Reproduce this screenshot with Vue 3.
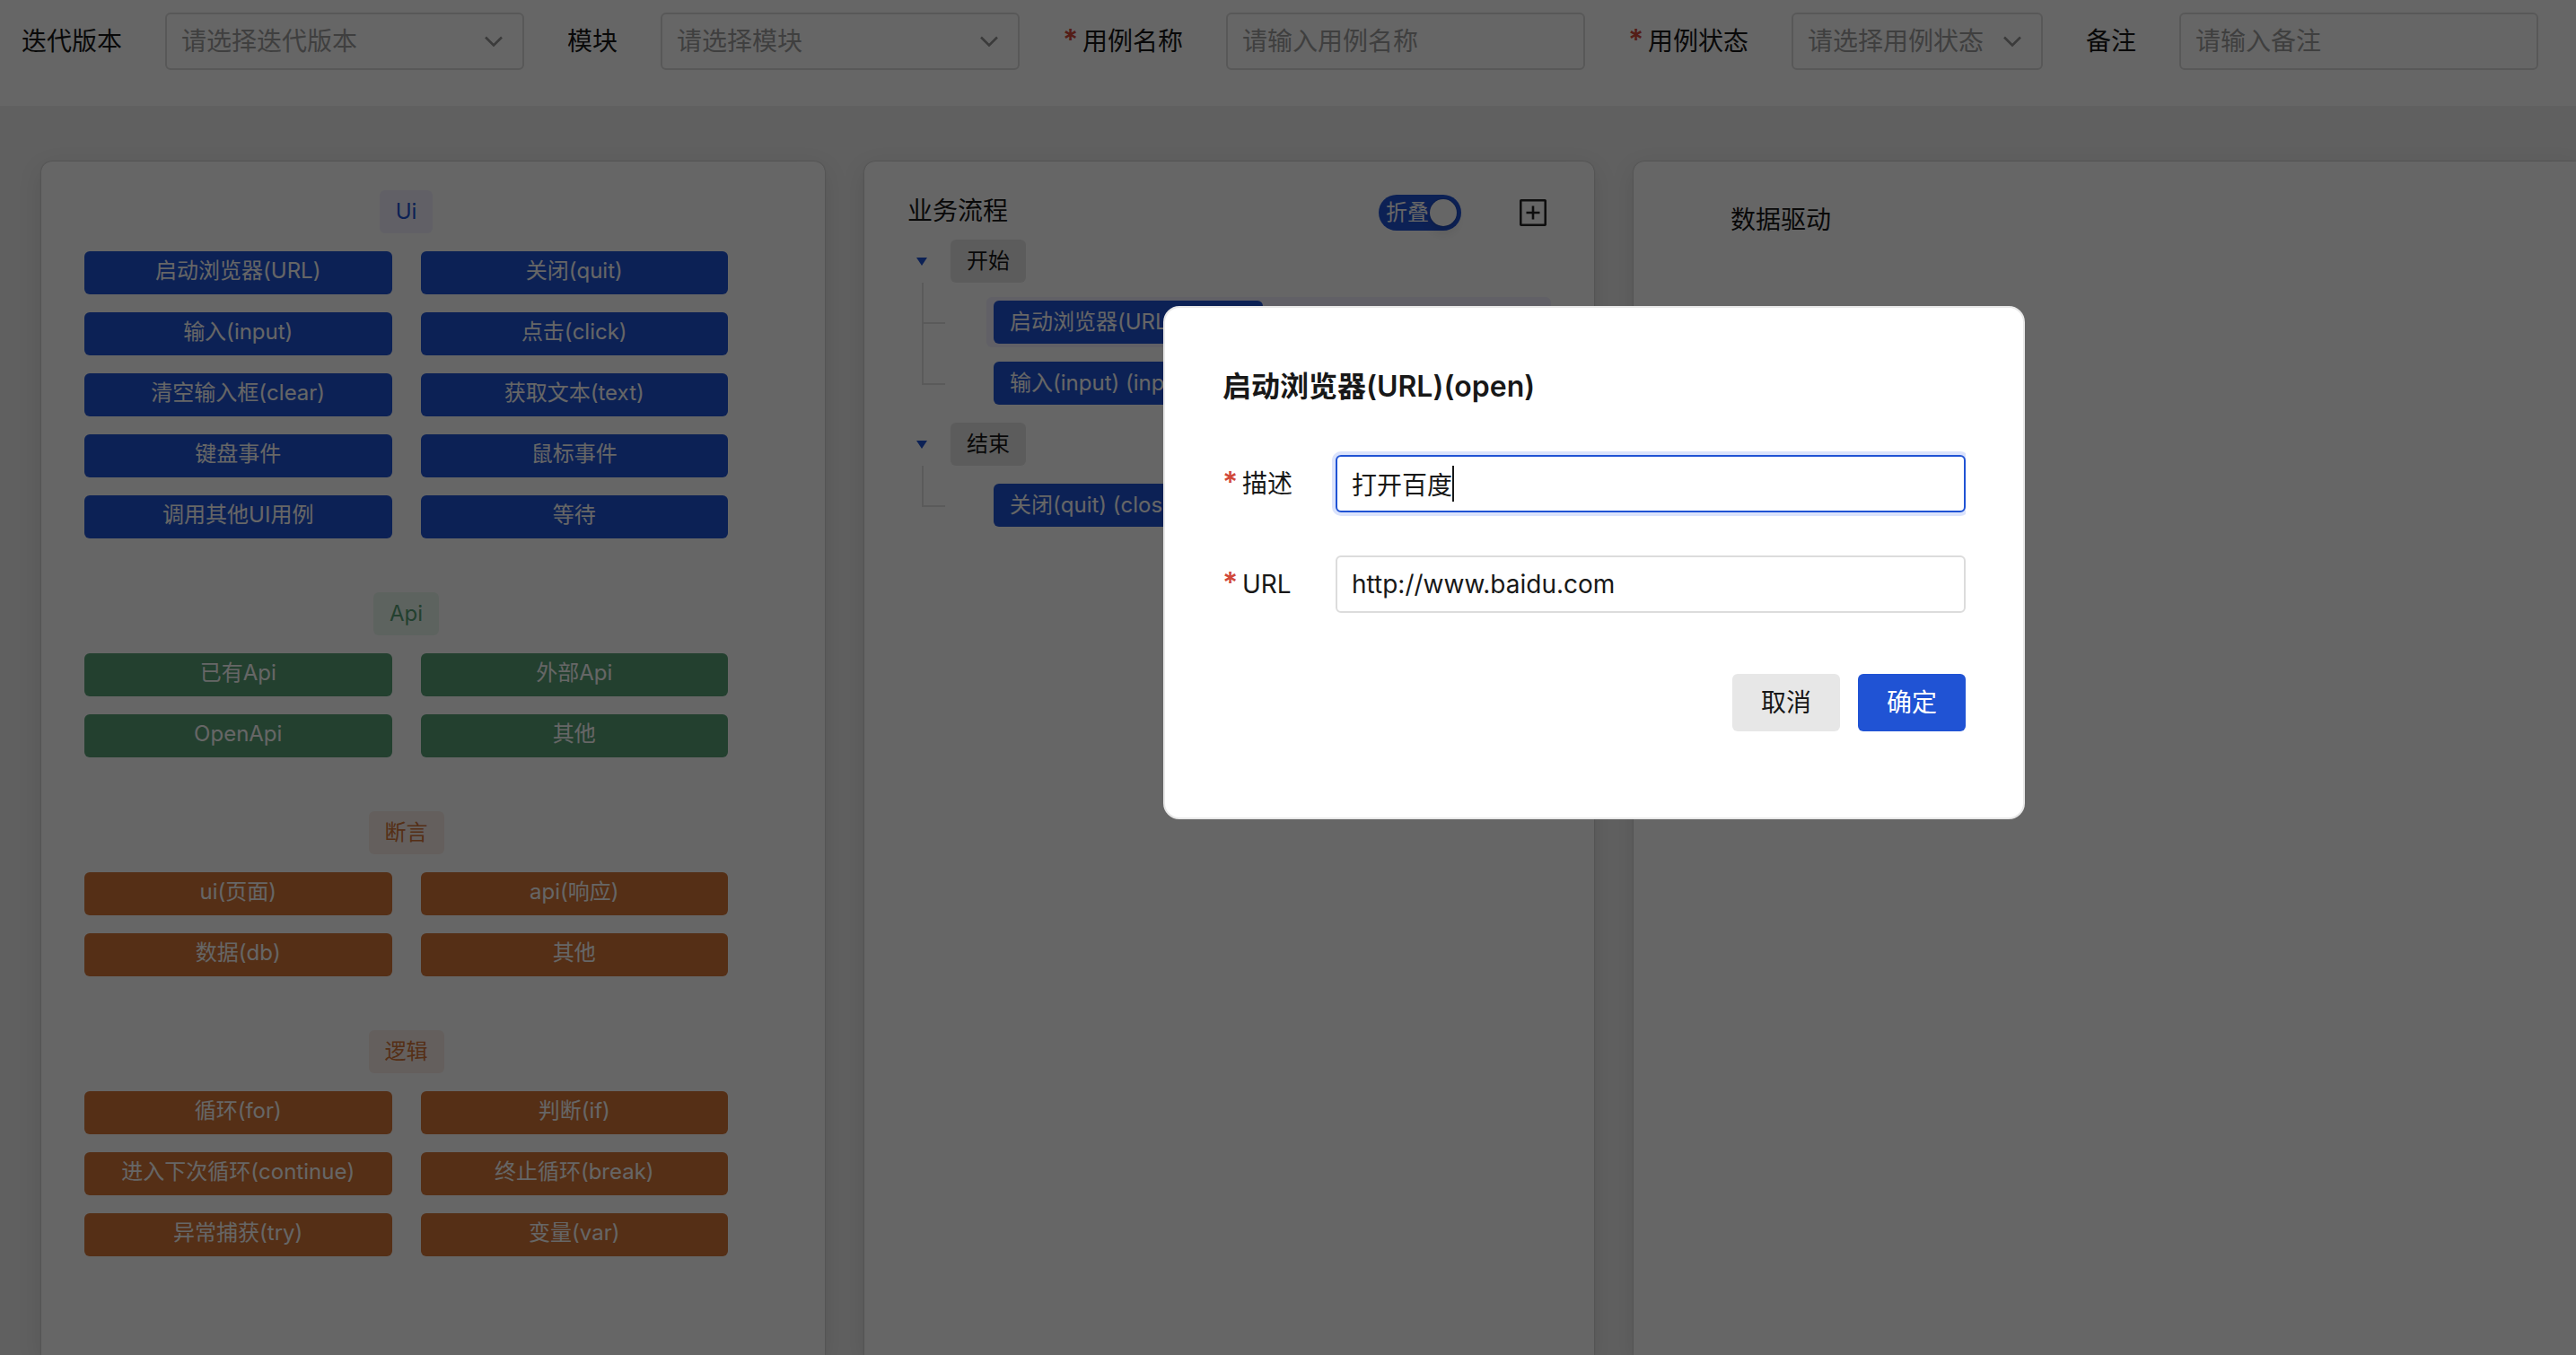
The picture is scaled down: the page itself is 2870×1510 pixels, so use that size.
<script setup>
import { ref } from 'vue'

const filters = [
  { id: 'version', label: '迭代版本', placeholder: '请选择迭代版本', type: 'select' },
  { id: 'module', label: '模块', placeholder: '请选择模块', type: 'select' },
  { id: 'name', label: '用例名称', placeholder: '请输入用例名称', type: 'input', required: true },
  { id: 'status', label: '用例状态', placeholder: '请选择用例状态', type: 'select', required: true, narrow: true },
  { id: 'remark', label: '备注', placeholder: '请输入备注', type: 'input' },
]

const groups = [
  {
    name: 'Ui',
    tone: 'blue',
    items: ['启动浏览器(URL)', '关闭(quit)', '输入(input)', '点击(click)', '清空输入框(clear)', '获取文本(text)', '键盘事件', '鼠标事件', '调用其他UI用例', '等待'],
  },
  { name: 'Api', tone: 'green', items: ['已有Api', '外部Api', 'OpenApi', '其他'] },
  { name: '断言', tone: 'orange', items: ['ui(页面)', 'api(响应)', '数据(db)', '其他'] },
  {
    name: '逻辑',
    tone: 'orange',
    items: ['循环(for)', '判断(if)', '进入下次循环(continue)', '终止循环(break)', '异常捕获(try)', '变量(var)'],
  },
]

const flow = [
  { name: '开始', steps: [{ text: '启动浏览器(URL) (open)', active: true }, { text: '输入(input) (input)' }] },
  { name: '结束', steps: [{ text: '关闭(quit) (close)' }] },
]

const folded = ref(true)
const description = ref('打开百度')
const url = ref('http://www.baidu.com')
</script>

<template>
  <div class="page">
    <form class="filters" @submit.prevent>
      <div v-for="f in filters" :key="f.id" class="filter" :class="{ narrow: f.narrow }">
        <label :for="f.id" class="label"><span v-if="f.required" class="star">*</span>{{ f.label }}</label>
        <div class="control">
          <template v-if="f.type === 'select'">
            <select :id="f.id" class="field select">
              <option value="">{{ f.placeholder }}</option>
            </select>
            <svg class="chevron" viewBox="0 0 20 12" aria-hidden="true">
              <path d="M1 1.5 10 10.5 19 1.5" />
            </svg>
          </template>
          <input v-else :id="f.id" class="field" type="text" :placeholder="f.placeholder" />
        </div>
      </div>
    </form>

    <main class="board">
      <section class="card palette">
        <div v-for="g in groups" :key="g.name" class="group" :class="g.tone">
          <span class="tag">{{ g.name }}</span>
          <div class="keywords">
            <button v-for="item in g.items" :key="item" type="button" class="keyword">{{ item }}</button>
          </div>
        </div>
      </section>

      <section class="card process">
        <header class="process-head">
          <h2 class="heading">业务流程</h2>
          <label class="switch">
            <input v-model="folded" type="checkbox" class="switch-input" />
            <span class="switch-text">折叠</span>
            <span class="knob"></span>
          </label>
          <button type="button" class="add" aria-label="添加">
            <svg viewBox="0 0 30 30" aria-hidden="true">
              <rect x="1.25" y="1.25" width="27.5" height="27.5" rx="1" />
              <path d="M15 7.5v15M7.5 15h15" />
            </svg>
          </button>
        </header>
        <ul class="tree">
          <li v-for="node in flow" :key="node.name">
            <div class="root">
              <svg class="caret-down" viewBox="0 0 12 9" aria-hidden="true"><path d="M0 0h12L6 9z" /></svg>
              <span class="tag neutral">{{ node.name }}</span>
            </div>
            <ul class="steps">
              <li v-for="s in node.steps" :key="s.text" class="step">
                <div class="step-row" :class="{ active: s.active }">
                  <span class="step-tag">{{ s.text }}</span>
                </div>
              </li>
            </ul>
          </li>
        </ul>
      </section>

      <section class="card data">
        <h2 class="heading">数据驱动</h2>
      </section>
    </main>

    <div class="mask">
      <form class="dialog" role="dialog" aria-labelledby="dialog-title" @submit.prevent>
        <h1 id="dialog-title" class="title">启动浏览器(URL)(open)</h1>
        <div class="rows">
          <div class="row">
            <label for="description" class="row-label"><span class="star">*</span>描述</label>
            <div class="row-control">
              <input id="description" v-model="description" class="field focused" type="text" />
              <span class="cursor"></span>
            </div>
          </div>
          <div class="row">
            <label for="url" class="row-label"><span class="star">*</span>URL</label>
            <div class="row-control">
              <input id="url" v-model="url" class="field" type="text" />
            </div>
          </div>
        </div>
        <div class="actions">
          <button type="button" class="action">取消</button>
          <button type="submit" class="action primary">确定</button>
        </div>
      </form>
    </div>
  </div>
</template>

<style>
body {
  margin: 0;
  overflow: hidden;
}
</style>

<style scoped>
.page {
  display: flex;
  flex-direction: column;
  min-height: 100vh;
  background: #efefef;
  color: #181818;
  font-family: Inter, "Noto Sans CJK SC", sans-serif;
  font-size: 28px;
  line-height: 40px;
}

.page *,
.page *::before {
  box-sizing: border-box;
}

button,
input,
select {
  margin: 0;
  font: inherit;
  color: inherit;
}

ul {
  margin: 0;
  padding: 0;
  list-style: none;
}

.filters {
  display: flex;
  gap: 48px;
  padding: 14px 42px 40px 24px;
  background: #fff;
}

.filter {
  display: flex;
  align-items: center;
  gap: 48px;
  flex: 400 1 auto;
}

.filter.narrow {
  flex-grow: 280;
}

.label {
  flex: none;
  white-space: nowrap;
}

.star {
  display: inline-block;
  width: 22px;
  color: #d1493a;
  font-size: 32px;
  font-weight: 600;
  line-height: 32px;
}

.control {
  position: relative;
  flex: 1 1 0;
  width: 0;
}

.field {
  display: block;
  width: 100%;
  height: 64px;
  padding: 0 16px;
  border: 2px solid #dcdcdc;
  border-radius: 6px;
  background: #fff;
}

.field::placeholder {
  color: #9e9e9e;
  opacity: 1;
}

.select {
  appearance: none;
  color: #9e9e9e;
}

.chevron {
  position: absolute;
  top: 26px;
  right: 24px;
  width: 20px;
  height: 12px;
  fill: none;
  stroke: #949494;
  stroke-width: 2.6;
  pointer-events: none;
}

.board {
  flex: 1;
  display: grid;
  grid-template-columns: 873fr 813fr 1050fr;
  gap: 44px;
  padding: 62px 0 0 46px;
}

.card {
  border-radius: 12px 12px 0 0;
  background: #fff;
  box-shadow: 0 0 2px rgba(0, 0, 0, 0.3), 0 8px 28px rgba(0, 0, 0, 0.1);
}

.palette {
  display: flex;
  flex-direction: column;
  gap: 60px;
  padding: 32px 108px 32px 48px;
}

.group {
  display: flex;
  flex-direction: column;
  align-items: center;
  gap: 20px;
}

.tag {
  padding: 0 18px;
  border-radius: 6px;
  font-size: 24px;
  line-height: 48px;
}

.blue .tag {
  background: #f2f0ff;
  color: #2053d4;
}

.green .tag {
  background: #e9f7ee;
  color: #57a077;
}

.orange .tag {
  background: #faeee8;
  color: #d47537;
}

.neutral {
  background: #e7e7e7;
}

.keywords {
  display: grid;
  grid-template-columns: 1fr 1fr;
  gap: 20px 32px;
  width: 100%;
}

.keyword {
  height: 48px;
  padding: 0 0 4px;
  border: 0;
  border-radius: 6px;
  color: #fff;
  font-size: 24px;
  line-height: 44px;
}

.blue .keyword {
  background: #2053d4;
}

.green .keyword {
  background: #57a077;
}

.orange .keyword {
  background: #d47537;
}

.heading {
  margin: 0;
  font-size: 28px;
  font-weight: 400;
  line-height: 36px;
}

.process {
  padding: 37px 48px 0;
}

.process-head {
  display: flex;
  align-items: flex-start;
  height: 40px;
}

.switch {
  display: flex;
  align-items: center;
  justify-content: space-between;
  width: 92px;
  height: 40px;
  margin: 0 60px 0 auto;
  padding: 0 5px 0 8px;
  border-radius: 20px;
  background: #2053d4;
  color: #fff;
  font-size: 24px;
}

.switch-input {
  position: absolute;
  opacity: 0;
}

.knob {
  flex: none;
  width: 30px;
  height: 30px;
  border-radius: 50%;
  background: #fff;
  box-shadow: 0 8px 12px rgba(0, 0, 0, 0.1), 0 0 2px rgba(0, 0, 0, 0.3);
}

.add {
  display: flex;
  align-items: center;
  justify-content: center;
  width: 40px;
  height: 40px;
  padding: 0;
  border: 0;
  background: none;
}

.add svg {
  width: 30px;
  height: 30px;
  fill: none;
  stroke: #242424;
  stroke-width: 2.6;
}

.root {
  display: flex;
  align-items: center;
  height: 68px;
}

.caret-down {
  width: 12px;
  height: 9px;
  margin: 0 26px 0 10px;
  fill: #2053d4;
}

.steps {
  margin-left: 16px;
}

.step {
  position: relative;
  padding: 6px 0 6px 72px;
}

.step::before {
  content: "";
  position: absolute;
  top: -10px;
  left: 0;
  width: 26px;
  bottom: 32px;
  border: solid #e0e0e0;
  border-width: 0 0 2px 2px;
}

.step + .step::before {
  top: -34px;
}

.step-row {
  display: flex;
  height: 56px;
  padding: 4px 8px;
  border-radius: 6px;
}

.step-row.active {
  background: #f2f0ff;
}

.step-tag {
  padding: 0 16px 0 18px;
  border-radius: 6px;
  background: #2053d4;
  color: #fff;
  font-size: 24px;
  line-height: 48px;
  white-space: nowrap;
}

.data {
  padding: 47px 48px 0 108px;
  border-top-right-radius: 0;
}

.mask {
  position: fixed;
  inset: 0;
  display: flex;
  align-items: flex-start;
  justify-content: center;
  padding: 341px 0 0 682px;
  box-sizing: border-box;
  background: rgba(0, 0, 0, 0.6);
}

.dialog {
  width: 960px;
  padding: 66px 64px 96px;
  border: 2px solid #e8e8e8;
  border-radius: 18px;
  background: #fff;
}

.title {
  margin: 0 0 54px;
  font-size: 32px;
  font-weight: 600;
  line-height: 44px;
}

.rows {
  display: flex;
  flex-direction: column;
  gap: 48px;
}

.row {
  display: flex;
  align-items: center;
}

.row-label {
  flex: none;
  width: 126px;
}

.row-control {
  position: relative;
  flex: 1;
}

.focused {
  border-color: #2053d4;
  box-shadow: 0 0 0 4px #dbe3fc;
  clip-path: inset(-4px 0 -4px -4px);
}

.cursor {
  position: absolute;
  top: 12px;
  left: 130px;
  width: 2px;
  height: 40px;
  background: #181818;
}

.actions {
  display: flex;
  justify-content: flex-end;
  gap: 20px;
  margin-top: 68px;
}

.action {
  width: 120px;
  height: 64px;
  padding: 0;
  border: 0;
  border-radius: 6px;
  background: #e7e7e7;
}

.primary {
  background: #2053d4;
  color: #fff;
}
</style>
